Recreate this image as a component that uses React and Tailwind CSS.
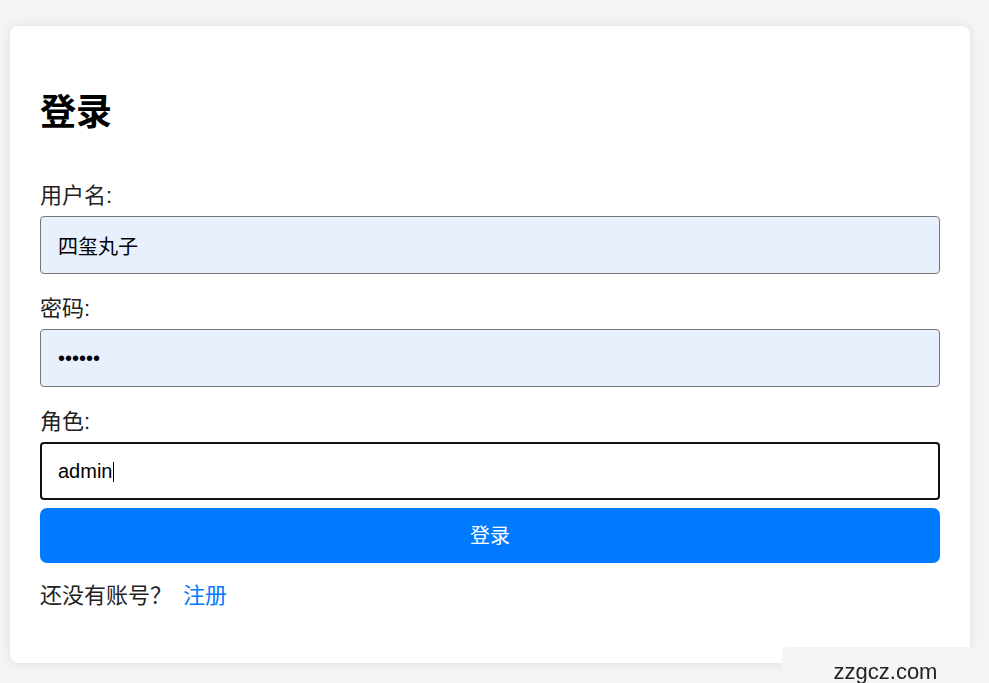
import React, { useEffect, useRef } from "react";

const font = { fontFamily: '"Liberation Sans", "Noto Sans CJK SC", sans-serif' };

function Field({ label, children, className = "" }) {
  return (
    <div className={className}>
      <label className="block text-[22px] leading-[22px] text-[#222]">{label}</label>
      {children}
    </div>
  );
}

export default function App() {
  const roleRef = useRef(null);

  useEffect(() => {
    // keep the caret after "admin" like the screenshot
    const el = roleRef.current;
    if (el) {
      el.focus();
      el.setSelectionRange(5, 5);
    }
  }, []);

  return (
    <div className="min-h-screen bg-[#f4f4f4] pl-[10px] pt-[26px]" style={font}>
      {/* Card */}
      <div className="w-[960px] rounded-lg bg-white px-[30px] pt-[30px] pb-[30px] shadow-[0_0_10px_rgba(0,0,0,0.1)]">
        <h1 className="mt-[39px] text-[36px] font-bold leading-[35px] text-black">登录</h1>

        <Field label="用户名:" className="mt-[55px]">
          <input
            type="text"
            readOnly
            value="四玺丸子"
            className="mt-[9px] block h-[58px] w-[900px] rounded border border-[#767676] bg-[#e8f0fe] px-[17px] text-[20px] text-black outline-none"
          />
        </Field>

        <Field label="密码:" className="mt-[24px]">
          <input
            type="password"
            readOnly
            value="123456"
            className="mt-[9px] block h-[58px] w-[900px] rounded border border-[#767676] bg-[#e8f0fe] px-[17px] text-[20px] text-black outline-none"
          />
        </Field>

        <Field label="角色:" className="mt-[24px]">
          <div className="relative mt-[9px]">
            <input
              ref={roleRef}
              type="text"
              defaultValue="admin"
              className="block h-[58px] w-[900px] rounded border-2 border-[#111] bg-white px-[16px] text-[20px] text-black caret-transparent outline-none"
            />
            {/* caret */}
            <span className="pointer-events-none absolute top-[20px] left-[73px] h-[20px] w-px bg-black" />
          </div>
        </Field>

        <button className="mt-[8px] block h-[55px] w-[900px] rounded-[7px] bg-[#007bff] text-[20px] text-white">
          登录
        </button>

        <p className="mt-[22px] mb-[26px] text-[22px] leading-[22px] text-[#222]">
          还没有账号？<a href="#" className="ml-[11px] text-[#007bff]">注册</a>
        </p>
      </div>

      {/* watermark */}
      <div className="fixed right-0 bottom-0 h-[36px] w-[207px] rounded-tl-sm bg-[#f5f5f5] pt-[8px] text-center text-[22px] leading-normal text-[#222]">
        zzgcz.com
      </div>
    </div>
  );
}
